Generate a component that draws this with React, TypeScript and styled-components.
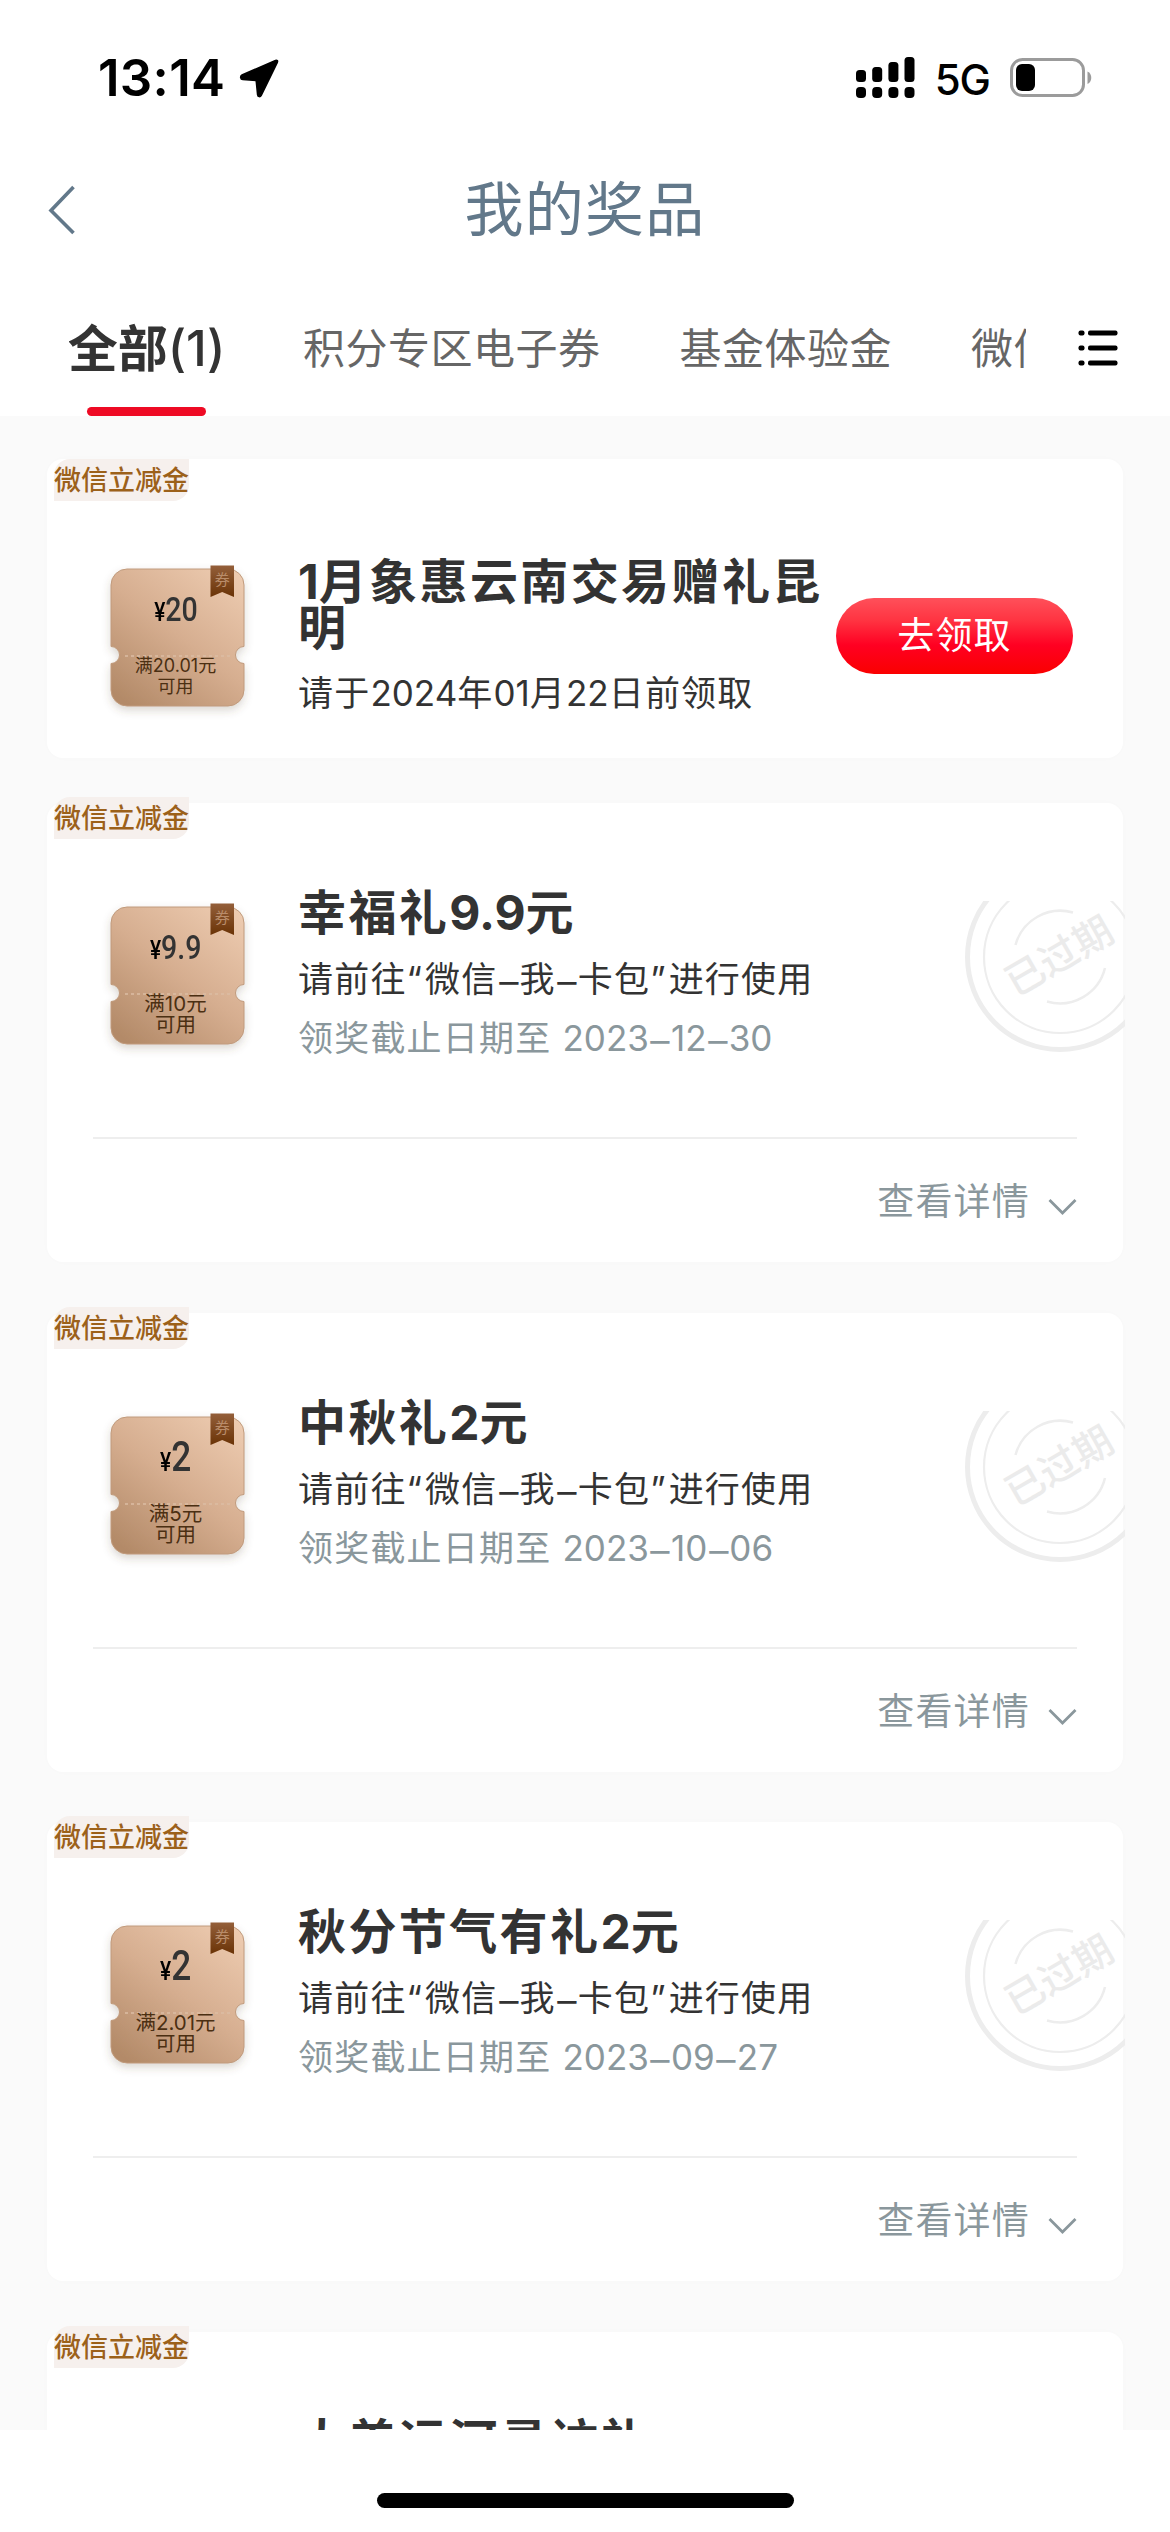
import React from "react";
import styled, { createGlobalStyle, css } from "styled-components";

const CJK = `"Noto Sans CJK SC", sans-serif`;

const Global = createGlobalStyle`
  * { box-sizing: border-box; }
  html, body { margin: 0; padding: 0; background: #fff; }
  body { font-family: Inter, ${CJK}; color: #333; }
  h1, h2, p { margin: 0; font-weight: 400; }
  button { border: 0; padding: 0; background: none; font: inherit; color: inherit; }
`;

const Screen = styled.div`
  width: 1170px;
  height: 2532px;
  overflow: hidden;
  display: flex;
  flex-direction: column;
  background: #fff;
`;

const StatusBar = styled.div`
  height: 156px;
  flex: none;
  display: flex;
  justify-content: space-between;
  align-items: center;
  padding: 0 78px 0 98px;
`;
const StatusGroup = styled.div<{ $gap: number }>`
  display: flex;
  align-items: center;
  gap: ${(p) => p.$gap}px;
`;
const Clock = styled.span`
  font: 600 51px/60px Inter, sans-serif;
  letter-spacing: 0.3px;
  color: #000;
`;
const Network = styled.span`
  font: 500 42px/60px Inter, sans-serif;
  letter-spacing: -1px;
  padding-top: 3px;
  color: #000;
`;

const NavBar = styled.header`
  height: 106px;
  flex: none;
  display: grid;
  grid-template-columns: 120px 1fr 120px;
  align-items: center;
`;
const Back = styled.button`
  display: flex;
  padding: 2px 0 0 48px;
`;
const PageTitle = styled.h1`
  font: 400 59px/80px ${CJK};
  letter-spacing: 1.2px;
  text-align: center;
  color: #62788a;
  padding-bottom: 6px;
`;

const Tabs = styled.nav`
  height: 154px;
  flex: none;
  display: flex;
  padding-left: 69px;
  align-items: stretch;
`;
const TabStrip = styled.div`
  width: 957px;
  display: flex;
  overflow: hidden;
  flex: none;
`;
const tabBase = css`
  display: flex;
  flex-direction: column;
  flex: none;
  white-space: nowrap;
  margin-right: 79px;
`;
const ActiveTab = styled.button`
  ${tabBase}
  width: 155px;
  align-items: center;
  padding-top: 53px;
  font: 700 50px/60px ${CJK};
  color: #333;
`;
const TabLabel = styled.span`
  height: 60px;
  display: flex;
  align-items: center;
`;
const Count = styled.span`
  font: 500 50px/60px Inter, sans-serif;
  letter-spacing: -0.2px;
  padding-top: 5px;
`;
const Tab = styled.button`
  ${tabBase}
  padding-top: 54px;
  font: 400 42px/60px ${CJK};
  letter-spacing: 0.5px;
  color: #666;
`;
const TabMark = styled.span`
  width: 119px;
  height: 9px;
  flex: none;
  margin-top: 32px;
  border-radius: 5px;
  background: #ee0a24;
`;
const MenuButton = styled.button`
  display: flex;
  padding: 67px 0 0 52px;
`;

const List = styled.main`
  height: 2014px;
  flex: none;
  overflow: hidden;
  background: #fafafa;
  padding: 43px 47px 0;
`;
const Card = styled.section<{ $height: number; $after: number }>`
  height: ${(p) => p.$height}px;
  margin-bottom: ${(p) => p.$after}px;
  border-radius: 16px;
  background: #fff;
  box-shadow: 0 0 14px rgba(0, 0, 0, 0.012);
  display: flex;
  flex-direction: column;
`;
const Tag = styled.span<{ $lift: number }>`
  align-self: flex-start;
  flex: none;
  margin: -${(p) => p.$lift}px 0 0 7px;
  height: 42px;
  width: 135px;
  white-space: nowrap;
  border-radius: 16px 0 16px 0;
  background: #f6f0ed;
  color: #9c611a;
  font: 500 27px/40px ${CJK};
`;
const Body = styled.div<{ $height: number }>`
  height: ${(p) => p.$height}px;
  flex: none;
  display: flex;
  align-items: flex-start;
  padding-left: 51px;
`;
const Coupon = styled.div<{ $top: number }>`
  width: 158px;
  height: 170px;
  margin: ${(p) => p.$top}px 42px 0 0;
  flex: none;
  display: grid;
  > * { grid-area: 1 / 1; }
`;
const CouponText = styled.div`
  z-index: 1;
  display: flex;
  flex-direction: column;
  align-items: center;
  padding-right: 3px;
`;
const Amount = styled.div`
  height: 56px;
  margin-top: 24px;
  display: flex;
  align-items: baseline;
  color: #333;
  line-height: 56px;
  transform: scaleX(0.84);
`;
const Yen = styled.span`
  font: 500 25px/56px Roboto, sans-serif;
  color: #000;
`;
const Value = styled.span<{ $size: number }>`
  font: 500 ${(p) => p.$size}px/56px Roboto, sans-serif;
`;
const Terms = styled.p<{ $size: number }>`
  margin-top: 18px;
  font: 400 ${(p) => p.$size}px/21px Inter, ${CJK};
  text-align: center;
  color: #4b2f12;
  white-space: nowrap;
`;

const Info = styled.div<{ $top: number }>`
  width: 538px;
  flex: none;
  padding-top: ${(p) => p.$top}px;
`;
const Name = styled.h2`
  font: 700 48px/46px Inter, ${CJK};
  letter-spacing: 2.4px;
  white-space: pre-line;
  color: #333;
`;
const Line = styled.p<{ $muted?: boolean; $top: number }>`
  margin-top: ${(p) => p.$top}px;
  font: 400 35px/44px Inter, ${CJK};
  letter-spacing: 1.2px;
  white-space: nowrap;
  color: ${(p) => (p.$muted ? "#8a979c" : "#333")};
`;
const Digits = styled.span`
  letter-spacing: 0;
`;
const Quote = styled.span`
  letter-spacing: 3px;
`;
const Dash = styled.span`
  display: inline-block;
  margin: 0 2.3px;
  letter-spacing: 0;
  transform: translateY(2px) scaleX(1.1);
`;
const Claim = styled.button`
  width: 237px;
  height: 76px;
  margin-top: 97px;
  border-radius: 38px;
  background: linear-gradient(#ff505a 0%, #ff3341 30%, #ff0022 62%, #fa0000 100%);
  color: #fff;
  font: 400 37px/70px ${CJK};
  letter-spacing: 1.2px;
  padding-bottom: 6px;
`;
const StampSlot = styled.div`
  width: 164px;
  margin: 62px 0 0 125px;
  flex: none;
  display: flex;
`;
const Footer = styled.div`
  flex: 1;
  margin: 0 46px;
  border-top: 2px solid #eee;
  display: flex;
  justify-content: flex-end;
  align-items: flex-start;
  gap: 18px;
  padding-top: 34px;
  color: #8a979c;
`;
const More = styled.span`
  font: 400 37px/52px ${CJK};
  letter-spacing: 1.2px;
`;
const MoreArrow = styled.span`
  display: flex;
  padding-top: 25px;
`;
const HomeArea = styled.div`
  flex: 1;
  display: flex;
  justify-content: center;
  padding-top: 63px;
`;
const HomeBar = styled.div`
  width: 417px;
  height: 15px;
  border-radius: 8px;
  background: #000;
`;

const CouponArt = () => (
  <svg width="158" height="170" viewBox="98 557 158 170">
    <defs>
      <linearGradient id="cp" x1="0.9" y1="0" x2="0.15" y2="1">
        <stop offset="0" stopColor="#edcbb0" />
        <stop offset="0.5" stopColor="#d6ae90" />
        <stop offset="1" stopColor="#b38a68" />
      </linearGradient>
      <linearGradient id="rb" x1="0" y1="0" x2="0" y2="1">
        <stop offset="0" stopColor="#945f3a" />
        <stop offset="1" stopColor="#6a3306" />
      </linearGradient>
      <filter id="sh" x="-20%" y="-20%" width="140%" height="140%">
        <feDropShadow dx="0" dy="4" stdDeviation="4" floodColor="#5a4a3a" floodOpacity="0.22" />
      </filter>
    </defs>
    <path
      filter="url(#sh)"
      fill="url(#cp)"
      stroke="#c09a7c"
      strokeWidth="1"
      d="M127 569H228a16 16 0 0 1 16 16V646.500a8.500 8.500 0 0 0 0 17V690a16 16 0 0 1-16 16H127a16 16 0 0 1-16-16V663.500a8.500 8.500 0 0 0 0-17V585a16 16 0 0 1 16-16Z"
    />
    <path d="M125 656H231" stroke="#dcbda4" strokeWidth="1.500" strokeDasharray="3 3" />
    <path d="M210.500 565.500H234V597L222.200 592L210.500 597Z" fill="url(#rb)" />
    <text x="222.300" y="585" fontSize="15" textAnchor="middle" fill="#b98c6a" fontFamily="Noto Sans CJK SC, sans-serif">
      券
    </text>
  </svg>
);

const Stamp = () => (
  <svg width="164" height="154" viewBox="961 901 164 154" fill="none" stroke="#ededed">
    <circle cx="1060" cy="957" r="92.500" strokeWidth="5" />
    <circle cx="1060" cy="957" r="76" strokeWidth="2.200" />
    <path d="M1015.500 945A46.500 46.500 0 0 1 1073 912.500" strokeWidth="2.500" />
    <path d="M1105 968A46.500 46.500 0 0 1 1047 1001.500" strokeWidth="2.500" />
    <text
      transform="translate(1059 956) rotate(-30)"
      y="14"
      fontSize="39"
      fontWeight="500"
      textAnchor="middle"
      fill="#ebebeb"
      stroke="none"
      fontFamily="Noto Sans CJK SC, sans-serif"
    >
      已过期
    </text>
  </svg>
);

/* Digits, dashes and quotes are spaced differently from the Chinese characters around them. */
const Mixed = ({ text }: { text: string }) => (
  <>
    {text.split(/([0-9.]+|–|“|”)/).map((part, i) => {
      if (/^[0-9.]+$/.test(part)) return <Digits key={i}>{part}</Digits>;
      if (part === "–") return <Dash key={i}>–</Dash>;
      if (part === "“" || part === "”") return <Quote key={i}>{part}</Quote>;
      return part;
    })}
  </>
);

type Prize = {
  name: string;
  amount: string;
  amountSize: number;
  terms: string;
  termsSize: number;
  deadline: string;
};

const expired: Prize[] = [
  { name: "幸福礼9.9元", amount: "9.9", amountSize: 34, terms: "满10元", termsSize: 20.5, deadline: "2023–12–30" },
  { name: "中秋礼2元", amount: "2", amountSize: 42, terms: "满5元", termsSize: 20.5, deadline: "2023–10–06" },
  { name: "秋分节气有礼2元", amount: "2", amountSize: 42, terms: "满2.01元", termsSize: 20.5, deadline: "2023–09–27" },
];

const CouponBlock = ({ top, amount, amountSize, terms, termsSize }: {
  top: number; amount: string; amountSize: number; terms: string; termsSize: number;
}) => (
  <Coupon $top={top}>
    <CouponArt />
    <CouponText>
      <Amount>
        <Yen>¥</Yen>
        <Value $size={amountSize}>{amount}</Value>
      </Amount>
      <Terms $size={termsSize}>
        {terms}
        <br />
        可用
      </Terms>
    </CouponText>
  </Coupon>
);

export default function App() {
  return (
    <Screen>
      <Global />
      <StatusBar>
        <StatusGroup $gap={14}>
          <Clock>13:14</Clock>
          <svg width="41" height="41" viewBox="0 0 41 41">
            <path
              d="M36.500 2.500 3 17C1 18 1.300 21.300 3.800 21.500L17.200 22.500L18.600 36.500C19 39 21.200 39.300 22.200 37.300L38.300 4.300C39 2.600 38 1.900 36.500 2.500Z"
              fill="#000"
              stroke="#000"
              strokeWidth="1.600"
              strokeLinejoin="round"
            />
          </svg>
        </StatusGroup>
        <StatusGroup $gap={20}>
          <svg width="59" height="42" viewBox="0 0 59 42" fill="#000">
            <rect x="0" y="13" width="10" height="12" rx="3.500" />
            <rect x="16.200" y="10" width="10" height="15" rx="3.500" />
            <rect x="32.400" y="5" width="10" height="20" rx="3.500" />
            <rect x="48.500" y="0" width="10" height="25" rx="3.500" />
            <rect x="0" y="30" width="10" height="11" rx="4" />
            <rect x="16.200" y="30" width="10" height="11" rx="4" />
            <rect x="32.400" y="30" width="10" height="11" rx="4" />
            <rect x="48.500" y="30" width="10" height="11" rx="4" />
          </svg>
          <Network>5G</Network>
          <svg width="82" height="40" viewBox="0 0 82 40">
            <rect x="1.500" y="1.500" width="72" height="36" rx="11" fill="none" stroke="#9b9b9b" strokeWidth="3" />
            <rect x="6" y="6" width="19" height="27" rx="6" fill="#000" />
            <path d="M77.500 13.500C82.500 15.500 82.500 24 77.500 26Z" fill="#9b9b9b" />
          </svg>
        </StatusGroup>
      </StatusBar>

      <NavBar>
        <Back>
          <svg width="28" height="50" viewBox="0 0 28 50" fill="none">
            <path d="M25.500 2 3 25.500 25.500 48" stroke="#62788a" strokeWidth="3.600" />
          </svg>
        </Back>
        <PageTitle>我的奖品</PageTitle>
      </NavBar>

      <Tabs>
        <TabStrip>
          <ActiveTab>
            <TabLabel>
              全部<Count>(1)</Count>
            </TabLabel>
            <TabMark />
          </ActiveTab>
          <Tab>积分专区电子券</Tab>
          <Tab>基金体验金</Tab>
          <Tab>微信立减金</Tab>
        </TabStrip>
        <MenuButton>
          <svg width="40" height="38" viewBox="0 0 40 38" fill="#000">
            {[1.5, 16.5, 31.5].map((y) => (
              <g key={y}>
                <rect x="0.500" y={y} width="6" height="5" rx="2" />
                <rect x="10" y={y} width="29.500" height="5" rx="2" />
              </g>
            ))}
          </svg>
        </MenuButton>
      </Tabs>

      <List>
        <Card $height={299} $after={45}>
          <Tag $lift={0}>微信立减金</Tag>
          <Body $height={257}>
            <CouponBlock top={56} amount="20" amountSize={34} terms="满20.01元" termsSize={18} />
            <Info $top={58}>
              <Name>
                <Mixed text={"1月象惠云南交易赠礼昆\n明"} />
              </Name>
              <Line $top={20}>
                <Mixed text="请于2024年01月22日前领取" />
              </Line>
            </Info>
            <Claim>去领取</Claim>
          </Body>
        </Card>
        {expired.map((p) => (
          <Card key={p.name} $height={459} $after={50.6}>
            <Tag $lift={6}>微信立减金</Tag>
            <Body $height={298}>
              <CouponBlock top={56} amount={p.amount} amountSize={p.amountSize} terms={p.terms} termsSize={p.termsSize} />
              <Info $top={51}>
                <Name>
                  <Mixed text={p.name} />
                </Name>
                <Line $top={21}>
                  <Mixed text="请前往“微信–我–卡包”进行使用" />
                </Line>
                <Line $top={15} $muted>
                  <Mixed text={`领奖截止日期至 ${p.deadline}`} />
                </Line>
              </Info>
              <StampSlot>
                <Stamp />
              </StampSlot>
            </Body>
            <Footer>
              <More>查看详情</More>
              <MoreArrow>
                <svg width="29" height="18" viewBox="0 0 29 18" fill="none">
                  <path d="M1.500 2 14.500 15 27.500 2" stroke="#8a979c" strokeWidth="2.800" />
                </svg>
              </MoreArrow>
            </Footer>
          </Card>
        ))}
        <Card $height={459} $after={0}>
          <Tag $lift={6}>微信立减金</Tag>
          <Body $height={298}>
            <Coupon $top={56} />
            <Info $top={51}>
              <Name>大美运河寻访礼</Name>
            </Info>
            <StampSlot>
              <Stamp />
            </StampSlot>
          </Body>
        </Card>
      </List>

      <HomeArea>
        <HomeBar />
      </HomeArea>
    </Screen>
  );
}
